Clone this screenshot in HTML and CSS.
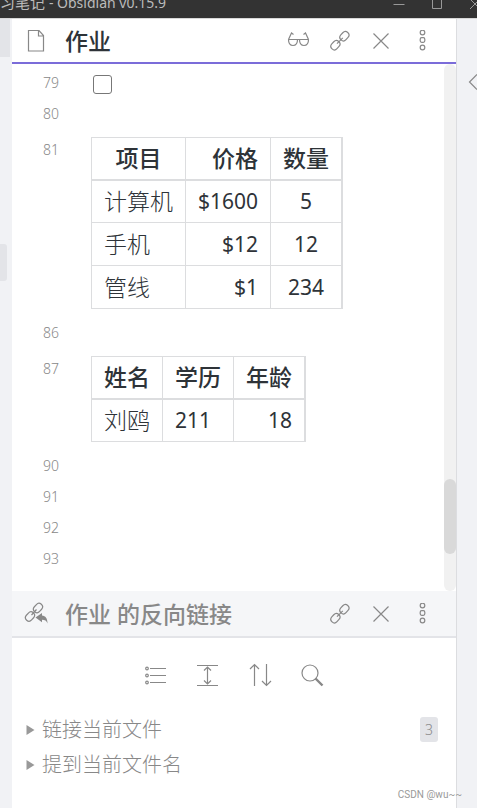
FILE: index.html
```html
<!DOCTYPE html>
<html lang="zh-CN">
<head>
  <meta charset="UTF-8">
  <meta name="viewport" content="width=device-width, initial-scale=1.0">
  <title>学习笔记 - Obsidian v0.15.9</title>
  <link rel="stylesheet" href="styles.css">
</head>
<body>
  <!-- Shared icons -->
  <svg class="sprite" aria-hidden="true">
    <symbol id="icon-link" viewBox="0 0 22 22">
      <rect x="-5" y="-3.5" width="10" height="7" rx="3.5" transform="translate(6.4 15.2) rotate(-48)" />
      <rect x="-5" y="-3.5" width="10" height="7" rx="3.5" transform="translate(15.4 6.2) rotate(-48)" />
      <path d="M8 13.6l5.8-5.8" />
    </symbol>
    <symbol id="icon-close" viewBox="0 0 22 22">
      <path d="M3.5 3.5l15 15M18.5 3.5l-15 15" />
    </symbol>
    <symbol id="icon-dots" viewBox="0 0 22 22">
      <circle cx="11.500" cy="2.500" r="2.300" />
      <rect x="9.200" y="7.700" width="4.600" height="4.600" rx="1.500" />
      <circle cx="11.500" cy="17.500" r="2.300" />
    </symbol>
  </svg>

  <header class="titlebar">
    <span class="titlebar-text">习笔记 <span class="app-name">- Obsidian v0.15.9</span></span>
    <div class="window-buttons">
      <button class="window-button" aria-label="最小化"><svg viewBox="0 0 12 12"><path d="M0.500 6.500h11" /></svg></button>
      <button class="window-button" aria-label="最大化"><svg viewBox="0 0 12 12"><path d="M1.500 1.500h9v9h-9z" /></svg></button>
      <button class="window-button" aria-label="关闭"><svg viewBox="0 0 12 12"><path d="M1 1l10 10M11 1l-10 10" /></svg></button>
    </div>
  </header>

  <div class="workspace">
    <aside class="rail rail-left">
      <div class="rail-tab"></div>
      <div class="rail-handle"></div>
    </aside>

    <main class="panes">
      <section class="pane">
        <div class="pane-header active">
          <svg class="icon pane-icon" viewBox="0 0 22 22"><path d="M3.500 0.500h10.500l4.500 5v15.500h-15zM13.500 0.500v5.500h5" /></svg>
          <h1 class="pane-title">作业</h1>
          <div class="pane-actions">
            <button class="icon-button" aria-label="预览"><svg class="icon" viewBox="0 0 22 22"><path d="M0 9.500h21M0.500 9.500c0 4 1.500 6 4.500 6s4.500-2 4.500-6M11.500 9.500c0 4 1.500 6 4.500 6s4.500-2 4.500-6M0.500 9.500l3-6.500 2 1.500M20.500 9.500l-3-6.500-2 1.500" /></svg></button>
            <button class="icon-button" aria-label="链接"><svg class="icon"><use href="#icon-link" /></svg></button>
            <button class="icon-button" aria-label="关闭"><svg class="icon"><use href="#icon-close" /></svg></button>
            <button class="icon-button" aria-label="更多"><svg class="icon"><use href="#icon-dots" /></svg></button>
          </div>
        </div>

        <div class="editor">
          <div class="lines">
            <div class="line">
              <span class="line-number">79</span>
              <input type="checkbox" class="task" aria-label="任务">
            </div>
            <div class="line"><span class="line-number">80</span></div>
            <div class="line table-line">
              <span class="line-number">81</span>
              <table>
                <thead>
                  <tr><th class="center">项目</th><th class="right">价格</th><th class="center">数量</th></tr>
                </thead>
                <tbody>
                  <tr><td>计算机</td><td class="num right">$1600</td><td class="num center">5</td></tr>
                  <tr><td>手机</td><td class="num right">$12</td><td class="num center">12</td></tr>
                  <tr><td>管线</td><td class="num right">$1</td><td class="num center">234</td></tr>
                </tbody>
              </table>
            </div>
            <div class="line"><span class="line-number">86</span></div>
            <div class="line table-line">
              <span class="line-number">87</span>
              <table>
                <thead>
                  <tr><th>姓名</th><th>学历</th><th class="right">年龄</th></tr>
                </thead>
                <tbody>
                  <tr><td>刘鸥</td><td class="num">211</td><td class="num right">18</td></tr>
                </tbody>
              </table>
            </div>
            <div class="line"><span class="line-number">90</span></div>
            <div class="line"><span class="line-number">91</span></div>
            <div class="line"><span class="line-number">92</span></div>
            <div class="line"><span class="line-number">93</span></div>
          </div>
          <div class="scrollbar"><div class="scrollbar-thumb"></div></div>
        </div>
      </section>

      <section class="pane">
        <div class="pane-header">
          <svg class="icon pane-icon" viewBox="0 0 22 22">
            <rect x="-5" y="-3.500" width="10" height="7" rx="3.500" transform="translate(5 13.500) rotate(-48)" />
            <rect x="-5" y="-3.500" width="10" height="7" rx="3.500" transform="translate(13 5) rotate(-48)" />
            <path d="M6.500 12l5-5.500" />
            <path class="solid" d="M10.500 14.500l6.500-4.500v2.500c3.500.2 5.500 3 5.500 8-1-2.700-2.500-3.700-5.500-3.700v2.400z" />
          </svg>
          <h2 class="pane-title">作业 的反向链接</h2>
          <div class="pane-actions">
            <button class="icon-button" aria-label="链接"><svg class="icon"><use href="#icon-link" /></svg></button>
            <button class="icon-button" aria-label="关闭"><svg class="icon"><use href="#icon-close" /></svg></button>
            <button class="icon-button" aria-label="更多"><svg class="icon"><use href="#icon-dots" /></svg></button>
          </div>
        </div>

        <div class="toolbar">
          <button class="icon-button" aria-label="折叠结果"><svg class="icon" viewBox="0 0 22 22"><path d="M5 4.500h16M5 11.500h16M5 18.500h16" /><circle cx="2" cy="4.500" r="1.300" /><circle cx="2" cy="11.500" r="1.300" /><circle cx="2" cy="18.500" r="1.300" /></svg></button>
          <button class="icon-button" aria-label="显示更多上下文"><svg class="icon" viewBox="0 0 22 22"><path d="M0 1.500h21M0 21.500h21M10.500 3v17M7 6.500l3.500-3.500 3.500 3.500M7 16.500l3.500 3.500 3.500-3.500" /></svg></button>
          <button class="icon-button" aria-label="排序"><svg class="icon" viewBox="0 0 22 22"><path d="M5.500 22v-21.500M1 5l4.500-4.500 4.500 4.500M17.500 0v21.500M13 17l4.500 4.500 4.500-4.500" /></svg></button>
          <button class="icon-button" aria-label="搜索"><svg class="icon" viewBox="0 0 22 22"><circle cx="9" cy="9" r="8" /><path class="thick" d="M14.500 14.500l7 7" /></svg></button>
        </div>

        <div class="backlinks">
          <button class="backlink-row">
            <svg class="arrow" viewBox="0 0 9 10"><path d="M0.500 0l8 5-8 5z" /></svg>
            <span>链接当前文件</span>
            <span class="badge">3</span>
          </button>
          <button class="backlink-row">
            <svg class="arrow" viewBox="0 0 9 10"><path d="M0.500 0l8 5-8 5z" /></svg>
            <span>提到当前文件名</span>
          </button>
        </div>
      </section>
    </main>

    <aside class="rail rail-right">
      <svg class="icon code-icon" viewBox="0 0 22 22"><path d="M8 3.500l-7.500 7.500 7.500 7.500M14 3.500l7.500 7.500-7.500 7.500" /></svg>
    </aside>
  </div>

  <div class="watermark">CSDN @wu~~</div>
</body>
</html>
```
FILE: styles.css
```css
* {
  box-sizing: border-box;
}

body {
  margin: 0;
  min-height: 100vh;
  display: flex;
  flex-direction: column;
  position: relative;
  overflow: hidden;
  font-family: "Noto Sans", "Noto Sans CJK SC", sans-serif;
  color: #2e3338;
  background: #fff;
}

button {
  padding: 0;
  border: none;
  background: none;
  font-family: inherit;
  cursor: pointer;
}

/* Icons */
.sprite {
  position: absolute;
  width: 0;
  height: 0;
}

.icon {
  display: block;
  flex: none;
  width: 22px;
  height: 22px;
  fill: none;
  stroke: #888;
  stroke-width: 1.2;
  overflow: visible;
}

.icon .solid {
  fill: #888;
  stroke: none;
}

.icon .thick {
  stroke-width: 2.4;
}

.icon-button {
  width: 22px;
  height: 22px;
}

/* Title bar */
.titlebar {
  display: flex;
  align-items: flex-end;
  justify-content: space-between;
  height: 19px;
  padding-bottom: 5px;
  background: #333;
  border-bottom: 1px solid #d8d8d8;
  overflow: hidden;
}

.titlebar-text {
  font-size: 15px;
  line-height: 20px;
  color: #bbb;
  white-space: nowrap;
}

.app-name {
  font-size: 14px;
}

.window-buttons {
  display: flex;
  gap: 26px;
  margin-right: -4px;
  padding-bottom: 3px;
}

.window-button {
  width: 12px;
  height: 12px;
}

.window-button svg {
  display: block;
  fill: none;
  stroke: #999;
}

/* Workspace */
.workspace {
  flex: 1;
  display: flex;
}

.rail {
  flex: none;
  background: #f1f2f5;
  overflow: hidden;
}

.rail-left {
  width: 12px;
}

.rail-tab {
  width: 10px;
  height: 38px;
  background: #e3e4e8;
}

.rail-handle {
  width: 7px;
  height: 37px;
  margin-top: 187px;
  background: #e3e4e8;
  border-radius: 0 3px 3px 0;
}

.rail-right {
  width: 21px;
  padding: 52px 0 0 12px;
  border-left: 1px solid #dcdde0;
}

.panes {
  flex: 1;
  min-width: 0;
}

/* Pane header */
.pane-header {
  display: flex;
  align-items: center;
  height: 47px;
  padding: 0 23px 0 13px;
  background: #f5f6f8;
  border-bottom: 2px solid #e3e4e8;
}

.pane-header.active {
  height: 45px;
  background: #fff;
  border-color: #7b6cd9;
}

.pane-title {
  flex: 1;
  margin: 0 0 0 18px;
  font-size: 23px;
  line-height: 32px;
  font-weight: 500;
  color: #888;
  white-space: nowrap;
}

.active .pane-title {
  color: #2e3338;
}

.pane-actions {
  display: flex;
  gap: 19px;
}

/* Editor */
.editor {
  display: flex;
}

.lines {
  flex: 1;
  padding: 3px 0 17px;
}

.line {
  display: flex;
  align-items: flex-start;
  min-height: 31px;
}

.line-number {
  width: 47px;
  margin-right: 32px;
  font-size: 14px;
  line-height: 31px;
  font-weight: 300;
  color: #888;
  text-align: right;
}

.task {
  appearance: none;
  width: 19px;
  height: 19px;
  margin: 8px 0 0 2px;
  border: 1px solid #777;
  border-radius: 3px;
}

.table-line {
  padding: 8px 0;
}

.table-line .line-number {
  line-height: 26px;
}

table {
  border-collapse: collapse;
  border-right: 2px solid #dcdddf;
}

th,
td {
  height: 43px;
  padding: 4px 12px;
  border: 1px solid #dcdddf;
  font-size: 23px;
  line-height: 32px;
  font-weight: 300;
  text-align: left;
  white-space: nowrap;
}

th {
  height: 42px;
  border-bottom-width: 2px;
  font-weight: 500;
}

.num {
  font-size: 21px;
  font-weight: 400;
}

.center {
  text-align: center;
}

.right {
  text-align: right;
}

.scrollbar {
  position: relative;
  width: 12px;
  background: #f1f1f1;
  border-radius: 6px;
}

.scrollbar-thumb {
  position: absolute;
  bottom: 7%;
  width: 12px;
  height: 75px;
  background: #d9d9d9;
  border-radius: 6px;
}

/* Backlinks */
.toolbar {
  display: flex;
  justify-content: center;
  gap: 30px;
  padding: 26px 0;
}

.backlinks {
  padding: 0 18px 0 14px;
}

.backlink-row {
  display: flex;
  align-items: center;
  width: 100%;
  height: 35px;
  font-size: 20px;
  line-height: 28px;
  font-weight: 300;
  color: #888;
}

.arrow {
  width: 9px;
  height: 10px;
  margin-right: 7px;
  fill: #999;
}

.badge {
  width: 18px;
  margin-left: auto;
  border-radius: 3px;
  background: #e3e4e8;
  font-size: 14px;
  line-height: 25px;
  text-align: center;
}

.watermark {
  position: absolute;
  right: 15px;
  bottom: 6px;
  font-family: Roboto, sans-serif;
  font-size: 10px;
  line-height: 14px;
  color: #999;
}
```
